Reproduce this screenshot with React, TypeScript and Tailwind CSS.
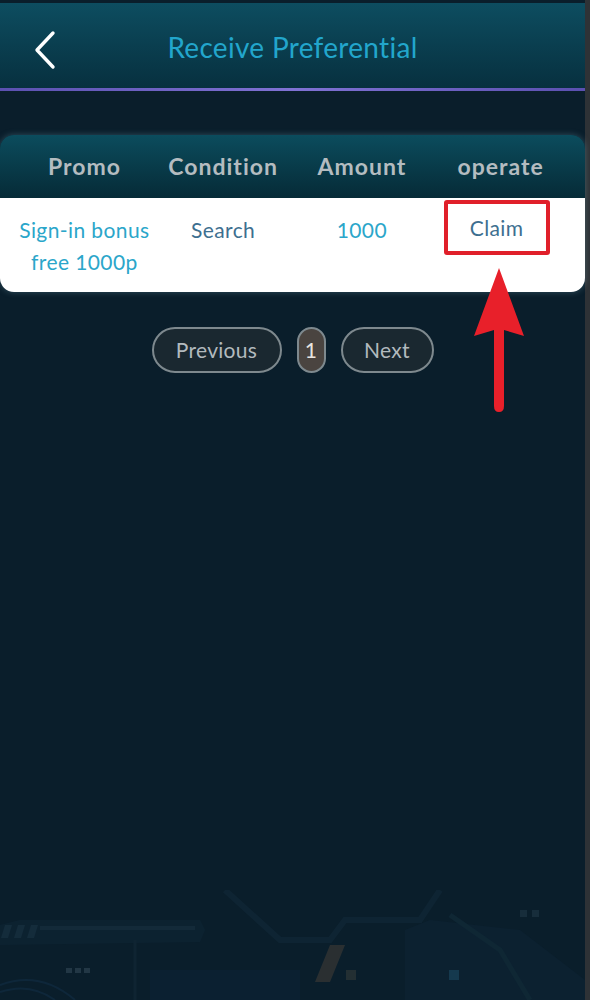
const columns = ["Promo", "Condition", "Amount", "operate"];

function BackIcon() {
  return (
    <svg
      className="absolute left-[30px] top-[26px]"
      width="30"
      height="42"
      viewBox="0 0 30 42"
      fill="none"
    >
      <path
        d="M23 4 L7 21 L23 38"
        stroke="white"
        strokeWidth="3.4"
        strokeLinecap="round"
        strokeLinejoin="round"
      />
    </svg>
  );
}

function RedArrow() {
  return (
    <svg
      className="absolute left-[470px] top-[264px]"
      width="58"
      height="152"
      viewBox="0 0 58 152"
    >
      <path d="M29 4 L54 72 L34 66 L34 142 Q34 148 29 148 Q24 148 24 142 L24 66 L4 72 Z" fill="#e8202a" />
    </svg>
  );
}

function BottomDecor() {
  return (
    <svg className="block opacity-50" width="585" height="110" viewBox="0 0 585 110">
      <path d="M0 35 L20 30 L200 30 L205 40 L200 52 L0 55 Z" fill="#10283a" opacity="0.8" />
      <path d="M5 35 L12 35 L8 48 L1 48 Z M18 35 L25 35 L21 48 L14 48 Z M31 35 L38 35 L34 48 L27 48 Z" fill="#1e3a4c" />
      <path d="M40 38 L195 38" stroke="#1c3648" strokeWidth="4" />
      <path d="M0 95 Q40 80 75 110" stroke="#13304a" strokeWidth="2" fill="none" />
      <path d="M0 102 Q30 92 55 110" stroke="#13304a" strokeWidth="2" fill="none" />
      <rect x="66" y="78" width="6" height="5" fill="#3a5060" />
      <rect x="75" y="78" width="6" height="5" fill="#3a5060" />
      <rect x="84" y="78" width="6" height="5" fill="#3a5060" />
      <path d="M135 50 L135 110" stroke="#142a3a" strokeWidth="3" />
      <path d="M150 80 L300 80 L300 110 L150 110 Z" fill="#0d2338" />
      <path d="M225 0 L280 50 L330 50 L345 30 L420 30 L440 0" stroke="#132b3b" strokeWidth="6" fill="none" />
      <path d="M330 55 L345 55 L330 92 L315 92 Z" fill="#5a4a3c" opacity="0.8" />
      <rect x="346" y="80" width="10" height="10" fill="#4a4a40" opacity="0.8" />
      <path d="M405 40 L430 30 L520 40 L585 90 L585 110 L405 110 Z" fill="#0e2436" />
      <path d="M450 25 L500 60 L530 110" stroke="#14303e" strokeWidth="5" fill="none" />
      <rect x="449" y="80" width="10" height="10" fill="#2a6a8a" opacity="0.7" />
      <rect x="520" y="20" width="7" height="7" fill="#243c4c" />
      <rect x="532" y="20" width="7" height="7" fill="#243c4c" />
    </svg>
  );
}

export default function App() {
  return (
    <div
      className="flex h-[1000px] w-[590px] overflow-hidden bg-[#2e3236]"
      style={{ fontFamily: "Lato, 'Open Sans', sans-serif" }}
    >
      <div className="relative flex w-[585px] flex-col bg-[#0a1e2b] pt-[3px]">
        {/* HEADER */}
        <div className="relative flex h-[85px] items-center justify-center bg-gradient-to-b from-[#0d4d60] to-[#07303f]">
          <BackIcon />
          <h1 className="mt-[2px] text-[28px] tracking-[0.3px] text-[#22a6cc]">
            Receive Preferential
          </h1>
        </div>
        <div className="h-[3px] bg-gradient-to-r from-[#5b50b0] via-[#8072d4] to-[#5b50b0]" />

        {/* TABLE */}
        <div className="mt-[44px] overflow-hidden rounded-[14px] shadow-[0_0_6px_rgba(120,170,190,0.35)]">
          <div className="grid h-[63px] grid-cols-4 items-center bg-gradient-to-b from-[#0b4c5d] to-[#062b37] px-[15px] text-[23px] font-bold tracking-[1px] text-[#b4bcc0]">
            {columns.map((c) => (
              <div key={c} className="text-center">
                {c}
              </div>
            ))}
          </div>
          <div className="grid h-[94px] grid-cols-4 bg-white px-[15px] text-[21px] leading-[32px] tracking-[0.4px]">
            <div className="pt-[16px] text-center text-[#2ba6ca]">
              Sign-in bonus
              <br />
              free 1000p
            </div>
            <div className="pt-[16px] text-center text-[#3d6f90]">Search</div>
            <div className="pt-[16px] text-center text-[#2ba6ca]">1000</div>
            <div className="flex justify-center pr-[8px] pt-[2px]">
              <div className="h-[55px] w-[106px] rounded-[3px] border-4 border-[#e01f2a] pt-[9px] text-center leading-[29px] text-[#3d6f90]">
                Claim
              </div>
            </div>
          </div>
        </div>

        {/* PAGINATION */}
        <div className="mt-[35px] flex items-center justify-center gap-[15px] text-[21px] tracking-[0.3px] text-[#b2babe]">
          <button className="h-[46px] w-[130px] rounded-full border-2 border-[#7e898e] bg-[#1a2830]">
            Previous
          </button>
          <button className="h-[46px] w-[29px] rounded-full border-2 border-[#7e898e] bg-[#4a4440] text-[#e8e4e0]">
            1
          </button>
          <button className="h-[46px] w-[93px] rounded-full border-2 border-[#7e898e] bg-[#1a2830]">
            Next
          </button>
        </div>

        <RedArrow />

        <div className="mt-auto">
          <BottomDecor />
        </div>
      </div>
    </div>
  );
}
